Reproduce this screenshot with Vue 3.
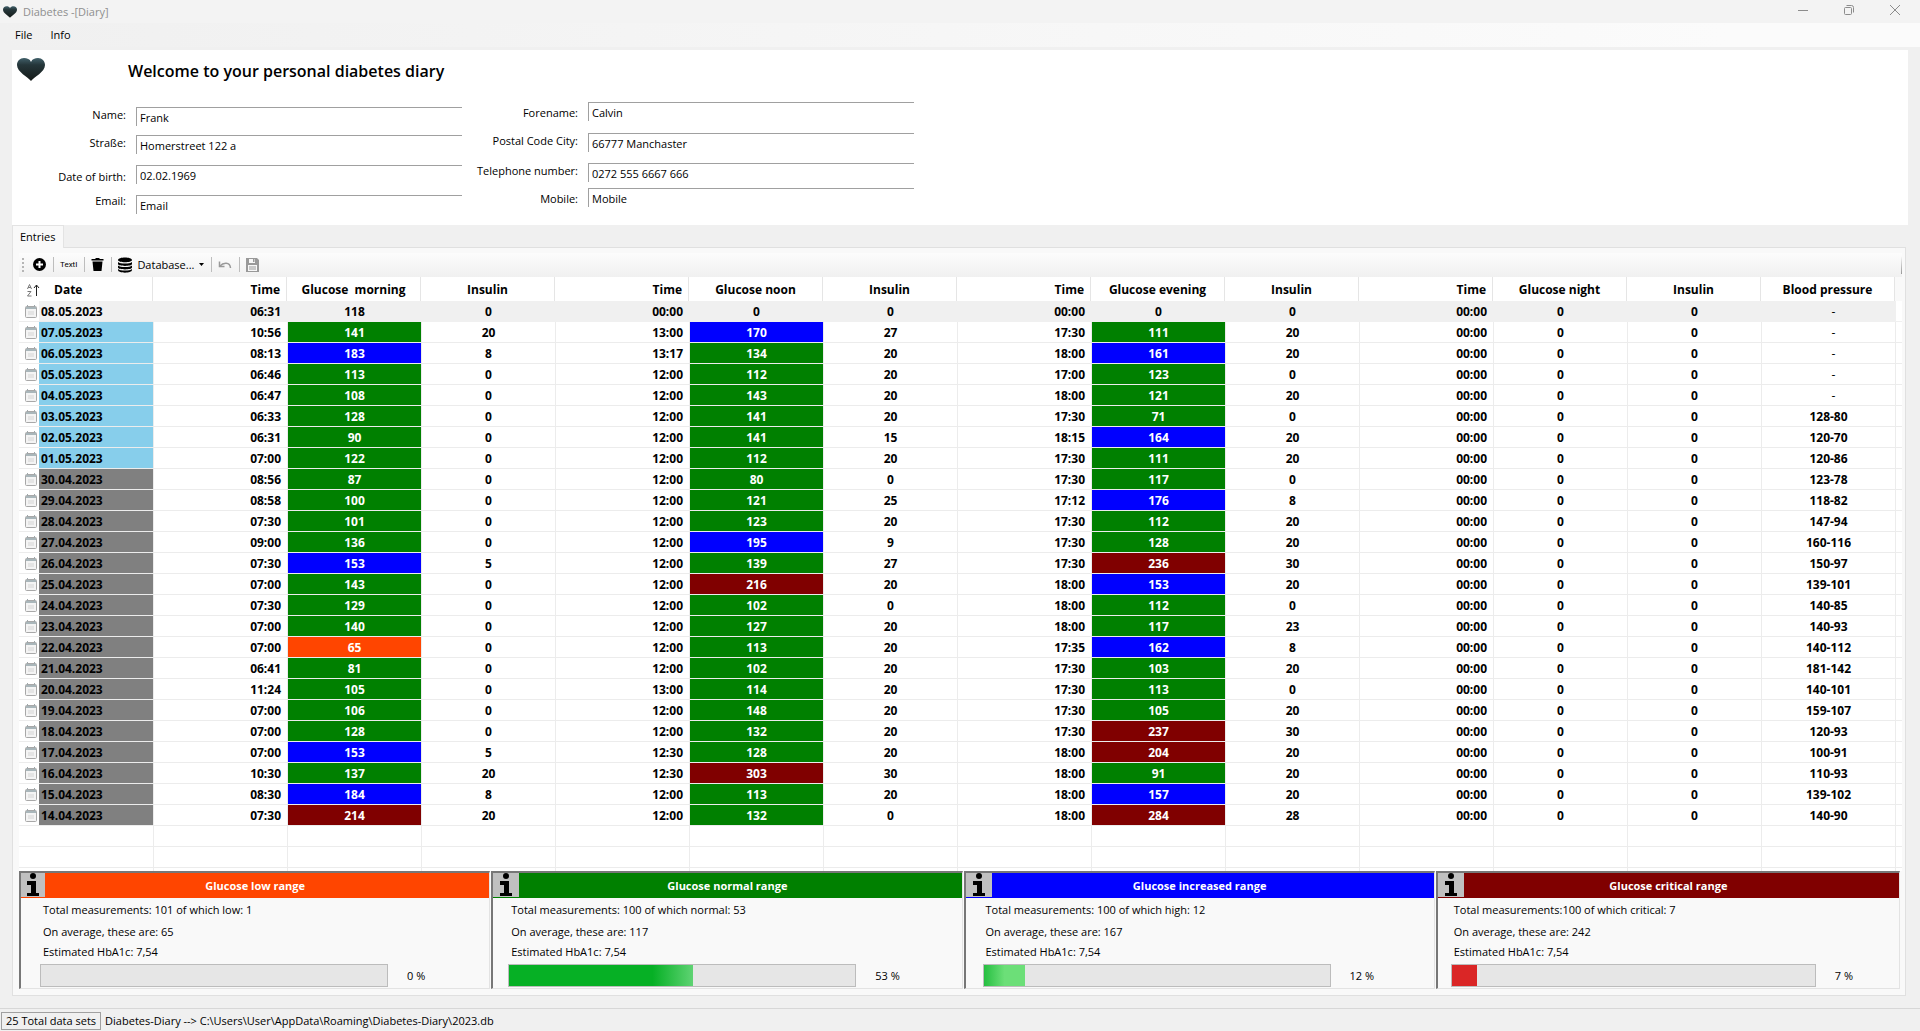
<script setup>
const leftFields = [
  { id: 'name', label: 'Name:', value: 'Frank' },
  { id: 'street', label: 'Straße:', value: 'Homerstreet 122 a' },
  { id: 'birth', label: 'Date of birth:', value: '02.02.1969' },
  { id: 'email', label: 'Email:', value: 'Email' },
]
const rightFields = [
  { id: 'forename', label: 'Forename:', value: 'Calvin' },
  { id: 'city', label: 'Postal Code City:', value: '66777 Manchaster' },
  { id: 'phone', label: 'Telephone number:', value: '0272 555 6667 666' },
  { id: 'mobile', label: 'Mobile:', value: 'Mobile' },
]

const headers = [
  'Time', 'Glucose\u00a0 morning', 'Insulin',
  'Time', 'Glucose noon', 'Insulin',
  'Time', 'Glucose evening', 'Insulin',
  'Time', 'Glucose night', 'Insulin',
  'Blood pressure',
]

const rows = `
08.05.2023 06:31 118 0 00:00 0 0 00:00 0 0 -
07.05.2023 10:56 141 20 13:00 170 27 17:30 111 20 -
06.05.2023 08:13 183 8 13:17 134 20 18:00 161 20 -
05.05.2023 06:46 113 0 12:00 112 20 17:00 123 0 -
04.05.2023 06:47 108 0 12:00 143 20 18:00 121 20 -
03.05.2023 06:33 128 0 12:00 141 20 17:30 71 0 128-80
02.05.2023 06:31 90 0 12:00 141 15 18:15 164 20 120-70
01.05.2023 07:00 122 0 12:00 112 20 17:30 111 20 120-86
30.04.2023 08:56 87 0 12:00 80 0 17:30 117 0 123-78
29.04.2023 08:58 100 0 12:00 121 25 17:12 176 8 118-82
28.04.2023 07:30 101 0 12:00 123 20 17:30 112 20 147-94
27.04.2023 09:00 136 0 12:00 195 9 17:30 128 20 160-116
26.04.2023 07:30 153 5 12:00 139 27 17:30 236 30 150-97
25.04.2023 07:00 143 0 12:00 216 20 18:00 153 20 139-101
24.04.2023 07:30 129 0 12:00 102 0 18:00 112 0 140-85
23.04.2023 07:00 140 0 12:00 127 20 18:00 117 23 140-93
22.04.2023 07:00 65 0 12:00 113 20 17:35 162 8 140-112
21.04.2023 06:41 81 0 12:00 102 20 17:30 103 20 181-142
20.04.2023 11:24 105 0 13:00 114 20 17:30 113 0 140-101
19.04.2023 07:00 106 0 12:00 148 20 17:30 105 20 159-107
18.04.2023 07:00 128 0 12:00 132 20 17:30 237 30 120-93
17.04.2023 07:00 153 5 12:30 128 20 18:00 204 20 100-91
16.04.2023 10:30 137 20 12:30 303 30 18:00 91 20 110-93
15.04.2023 08:30 184 8 12:00 113 20 18:00 157 20 139-102
14.04.2023 07:30 214 20 12:00 132 0 18:00 284 28 140-90
`.trim().split('\n').map((line, index) => {
  const [date, ...rest] = line.split(' ')
  const pressure = rest.pop()
  return {
    date,
    selected: index === 0,
    month: date.includes('.05.') ? 'current' : 'previous',
    cells: [...rest, '00:00', '0', '0', pressure],
  }
})

function cellClass(row, index) {
  if (index === 12) return row.cells[index] === '-' ? 'center dash' : 'center'
  const kind = index % 3
  if (kind === 0) return 'time'
  if (kind === 2 || row.selected || index === 10) return 'center'
  const value = Number(row.cells[index])
  if (value < 70) return 'center level low'
  if (value <= 150) return 'center level normal'
  if (value <= 200) return 'center level high'
  return 'center level critical'
}

const cards = [
  { id: 'low', title: 'Glucose low range', total: 'Total measurements: 101 of which low: 1', average: 'On average, these are: 65', percent: 0 },
  { id: 'normal', title: 'Glucose normal range', total: 'Total measurements: 100 of which normal: 53', average: 'On average, these are: 117', percent: 53 },
  { id: 'high', title: 'Glucose increased range', total: 'Total measurements: 100 of which high: 12', average: 'On average, these are: 167', percent: 12 },
  { id: 'critical', title: 'Glucose critical range', total: 'Total measurements:100 of which critical: 7', average: 'On average, these are: 242', percent: 7 },
]
</script>

<template>
  <div class="window">
    <svg class="defs" width="0" height="0" aria-hidden="true">
      <defs>
        <linearGradient id="heartFill" x1="0" y1="0" x2="0" y2="1">
          <stop offset="0" stop-color="#41606a" />
          <stop offset="0.3" stop-color="#25363a" />
          <stop offset="1" stop-color="#151a18" />
        </linearGradient>
        <symbol id="heart" viewBox="0 0 28 23">
          <path d="M14 23C11 19 0 14 0 7C0 3 3 0 7 0C10 0 13 1 14 4C15 1 18 0 21 0C25 0 28 3 28 7C28 14 17 19 14 23Z" fill="url(#heartFill)" />
        </symbol>
        <symbol id="calendar" viewBox="0 0 12 13">
          <rect x="0.500" y="1.500" width="11" height="11" rx="1" fill="#f4f4f4" stroke="#a8a8a8" />
          <path d="M1 2h10v2H1z" fill="#a9b6ba" />
          <path d="M2.500 0v2M9.500 0v2" stroke="#a0a8ab" />
          <path d="M3 6h6v4H3z" fill="#e4e4e4" />
        </symbol>
      </defs>
    </svg>

    <header class="titlebar">
      <svg class="title-icon" width="14" height="12"><use href="#heart" /></svg>
      <span class="title">Diabetes -[Diary]</span>
      <div class="window-buttons">
        <button type="button" aria-label="Minimize"><svg width="12" height="12"><path d="M1 6.500h10" stroke="#8c8c8c" fill="none" /></svg></button>
        <button type="button" aria-label="Restore"><svg width="12" height="12" fill="none" stroke="#8c8c8c"><rect x="1.500" y="3.500" width="7" height="7" rx="1" /><path d="M3.500 1.500h5a2 2 0 0 1 2 2v5" /></svg></button>
        <button type="button" aria-label="Close"><svg width="12" height="12"><path d="M1 1l10 10M11 1L1 11" stroke="#8c8c8c" fill="none" /></svg></button>
      </div>
    </header>
    <nav class="menubar">
      <button type="button">File</button>
      <button type="button">Info</button>
    </nav>

    <section class="profile">
      <div class="profile-head">
        <svg class="logo" width="28" height="23"><use href="#heart" /></svg>
        <h1>Welcome to your personal diabetes diary</h1>
      </div>
      <form class="form">
        <div class="labels left">
          <label v-for="f in leftFields" :key="f.id" :for="f.id">{{ f.label }}</label>
        </div>
        <div class="inputs left">
          <input v-for="f in leftFields" :id="f.id" :key="f.id" type="text" :value="f.value" />
        </div>
        <div class="labels right">
          <label v-for="f in rightFields" :key="f.id" :for="f.id">{{ f.label }}</label>
        </div>
        <div class="inputs right">
          <input v-for="f in rightFields" :id="f.id" :key="f.id" type="text" :value="f.value" />
        </div>
      </form>
    </section>

    <div class="tabs"><button type="button" class="tab">Entries</button></div>
    <main class="pane">
      <div class="toolbar">
        <span class="grip"></span>
        <button type="button" aria-label="Add entry">
          <svg width="13" height="13"><circle cx="6.500" cy="6.500" r="6.500" /><path d="M6.500 3v7M3 6.500h7" stroke="#fff" stroke-width="2" /></svg>
        </button>
        <span class="sep"></span>
        <button type="button" class="tiny">TextI</button>
        <span class="sep"></span>
        <button type="button" aria-label="Delete entry">
          <svg width="13" height="13"><path d="M0.500 1H4L5 0h3l1 1h3.500v1.500h-12zM1.500 3.500h10L10.500 13h-8z" /></svg>
        </button>
        <span class="sep"></span>
        <button type="button" class="database">
          <svg width="14" height="16"><path d="M0 3C0 -0.500 14 -0.500 14 3C14 6 0 6 0 3ZM0 5C2 7 12 7 14 5V7C14 9.500 0 9.500 0 7ZM0 8.500C2 10.500 12 10.500 14 8.500V10.500C14 13 0 13 0 10.500ZM0 12C2 14 12 14 14 12V13C14 16.500 0 16.500 0 13Z" /></svg>
          <span>Database...</span>
          <svg width="5" height="3"><path d="M0 0h5L2.500 3z" /></svg>
        </button>
        <span class="sep"></span>
        <button type="button" aria-label="Undo">
          <svg width="14" height="10" fill="none" stroke="#999"><path d="M1.500 1.500V6.500H6.500" stroke-width="1.500" /><path d="M2 6C5 2.500 12 1.500 12.500 8" stroke-width="1.500" /></svg>
        </button>
        <span class="sep"></span>
        <button type="button" aria-label="Save">
          <svg width="13" height="14"><path d="M0 0h11l2 2v12H0z" fill="#999" /><path d="M3 1h6v4H3zM2 7h9v6H2z" fill="#f7f7f7" /><path d="M7 1h1.500v3H7zM3 8.500h7v1H3zM3 10.500h7v1H3z" fill="#999" /></svg>
        </button>
        <span class="overflow"></span>
      </div>

      <table class="grid">
        <colgroup>
          <col v-for="n in 14" :key="n" />
          <col class="filler" />
        </colgroup>
        <thead>
          <tr>
            <th scope="col" class="date-head">
              <div>
                <svg width="13" height="13" fill="none" stroke="#777"><path d="M0.500 5L2.500 0.500L4.500 5M1 3.500h3M0.500 7.500h3.500L0.500 12h4" /><path d="M9.500 12V1M7 4L9.500 1L12 4" stroke="#222" /></svg>
                <span>Date</span>
              </div>
            </th>
            <th v-for="(h, i) in headers" :key="i" scope="col" :class="{ time: h === 'Time' }">{{ h }}</th>
            <td class="edge"></td>
          </tr>
        </thead>
        <tbody>
          <tr v-for="row in rows" :key="row.date" :class="{ selected: row.selected }">
            <th scope="row" class="date">
              <div>
                <svg width="12" height="13"><use href="#calendar" /></svg>
                <span :class="row.month">{{ row.date }}</span>
              </div>
            </th>
            <td v-for="(c, i) in row.cells" :key="i" :class="cellClass(row, i)">{{ c }}</td>
            <td class="end"></td>
          </tr>
          <tr v-for="n in 2" :key="'e' + n"><td class="first"></td><td v-for="k in 14" :key="k"></td></tr>
          <tr class="cut"><td class="first"></td><td v-for="k in 14" :key="k"></td></tr>
        </tbody>
      </table>

      <div class="cards">
        <section v-for="c in cards" :key="c.id" class="card" :class="'card-' + c.id">
          <div class="card-head" :class="c.id">
            <button type="button" aria-label="Information">
              <svg width="14" height="24"><circle cx="7" cy="3" r="3" /><path d="M1 8h9v12h3v3H1v-3h4v-8H1z" /></svg>
            </button>
            <h2>{{ c.title }}</h2>
          </div>
          <div class="card-body">
            <p class="total">{{ c.total }}</p>
            <p>{{ c.average }}</p>
            <p>Estimated HbA1c: 7,54</p>
            <div class="meter">
              <progress :aria-label="c.title" :value="c.percent" max="100"></progress>
              <span>{{ c.percent }} %</span>
            </div>
          </div>
        </section>
      </div>
    </main>

    <footer class="status">
      <span class="count">25 Total data sets</span>
      <span>Diabetes-Diary --&gt; C:\Users\User\AppData\Roaming\Diabetes-Diary\2023.db</span>
    </footer>
  </div>
</template>

<style>
body {
  background: #f0f0f0;
}
</style>

<style scoped>
.window {
  display: flex;
  flex-direction: column;
  min-height: 100vh;
  background: #f0f0f0;
  color: #000;
  font-family: "Open Sans", "Noto Sans", sans-serif;
  font-size: 11px;
  line-height: 16px;
}
.window * {
  box-sizing: border-box;
}
button {
  border: 0;
  padding: 0;
  background: none;
  color: inherit;
  font: inherit;
  display: flex;
  align-items: center;
}
.defs {
  position: absolute;
}
.titlebar {
  display: flex;
  align-items: center;
  height: 23px;
  padding: 0 19px 0 3px;
  background: #f3f3f3;
  color: #8f8f8f;
}
.title {
  margin-left: 6px;
}
.window-buttons {
  display: flex;
  gap: 34px;
  margin-left: auto;
  padding-bottom: 3px;
}
.menubar {
  display: flex;
  gap: 18px;
  height: 24px;
  padding-left: 15px;
  background: linear-gradient(90deg, #f0f0f0, #fbfbfb 90%);
}
.profile {
  margin: 3px 12px 0;
  height: 175px;
  background: #fff;
}
.profile-head {
  display: flex;
  align-items: center;
  height: 42px;
  padding-left: 5px;
}
.logo {
  margin-bottom: 4px;
}
h1 {
  margin: 0 0 0 83px;
  font-size: 16px;
  font-weight: 600;
}
.form {
  display: flex;
  align-items: flex-start;
  padding-top: 10px;
}
.labels,
.inputs {
  display: grid;
}
.labels {
  text-align: right;
}
.labels.left {
  width: 114px;
  margin-top: 5px;
  grid-template-rows: 28px 34px 24px 16px;
}
.inputs.left {
  width: 326px;
  margin: 5px 0 0 10px;
  grid-template-rows: 28px 30px 30px 20px;
}
.labels.right {
  width: 116px;
  margin-top: 3px;
  grid-template-rows: 28px 30px 28px 16px;
}
.inputs.right {
  width: 326px;
  margin-left: 10px;
  grid-template-rows: 31px 30px 25px 20px;
}
input {
  width: 100%;
  height: 19px;
  border: solid #a0a0a0;
  border-width: 1px 0 0 1px;
  padding: 1px 0 0 3px;
  background: #fff;
  font: inherit;
  color: inherit;
}
.tabs {
  display: flex;
  height: 22px;
  padding-left: 12px;
}
.tab {
  height: 23px;
  padding: 0 8px 1px 7px;
  border: 1px solid #e3e3e3;
  border-bottom: 0;
  background: #f9f9f9;
  position: relative;
}
.pane {
  margin: 0 14px 12px 12px;
  border: 1px solid #e0e0e0;
  padding: 5px 3px 6px 6px;
  background: #f9f9f9;
}
.toolbar {
  display: flex;
  align-items: center;
  height: 24px;
  padding: 0 0 1px 3px;
  background: linear-gradient(#fcfcfc, #f0f0f0);
}
.grip {
  width: 2px;
  height: 14px;
  margin-right: 9px;
  background: repeating-linear-gradient(#b5b5b5 0 2px, transparent 2px 4px);
}
.sep {
  width: 1px;
  height: 15px;
  margin: 0 6px 0 7px;
  background: #bdbdbd;
}
.tiny {
  font-family: Roboto, sans-serif;
  font-size: 8px;
}
.database {
  gap: 5px;
}
.overflow {
  width: 1px;
  height: 18px;
  margin-left: auto;
  background: linear-gradient(transparent, #999);
}
.grid {
  width: 100%;
  table-layout: fixed;
  border-collapse: separate;
  border-spacing: 0;
  background: #fff;
  font-size: 12px;
  font-weight: 700;
}
.filler {
  width: 7px;
}
th,
td {
  padding: 2px 0 0;
}
thead th {
  height: 24px;
  border-right: 1px solid #e5e5e5;
  text-align: center;
}
.edge {
  background: #f9f9f9;
}
.grid .time {
  text-align: right;
  padding-right: 6px;
}
.date-head div {
  display: flex;
  align-items: center;
  padding-left: 8px;
  gap: 14px;
}
tbody td,
tbody th {
  height: 21px;
  border-left: 1px solid #ececec;
  border-bottom: 1px solid #ececec;
  background-clip: padding-box;
}
tbody th,
tbody .first {
  border-left: 0;
}
.center {
  text-align: center;
}
.dash {
  padding-left: 10px;
  font-weight: 400;
}
.date {
  padding: 0;
}
.date div {
  display: flex;
  align-items: center;
  height: 20px;
  padding-left: 6px;
}
.date svg {
  flex: none;
  margin-right: 2px;
}
.date span {
  flex: 1;
  padding: 2px 0 0 2px;
  line-height: 18px;
  text-align: left;
}
.current {
  background: #87ceeb;
}
.previous {
  background: #808080;
}
.selected td {
  background: #f0f0f0;
  border-color: #f0f0f0;
}
.selected .date span {
  background: #f0f0f0;
}
.selected td.end {
  background: #fff;
}
.cut td {
  height: 3px;
  border-bottom: 0;
}
.level {
  color: #fff;
}
.low {
  background-color: #ff4500;
}
.normal {
  background-color: #008000;
}
.high {
  background-color: #0000ff;
}
.critical {
  background-color: #800000;
}
.cards {
  display: grid;
  grid-template-columns: repeat(3, 471fr) 464fr;
  gap: 1px;
  padding-right: 2px;
}
.card {
  border: solid #777;
  border-width: 2px 1px 1px 2px;
  border-right-color: #e3e3e3;
  border-bottom-color: #e3e3e3;
}
.card-head {
  display: grid;
  grid-template-columns: 26px 1fr 26px;
  align-items: start;
  height: 25px;
  color: #fff;
}
.card-head.low {
  grid-template-columns: 24px 1fr 24px;
}
.card-head button {
  height: 24px;
  justify-content: center;
  background: #c0c0c0;
  color: #000;
}
h2 {
  margin: 0;
  font-size: 11px;
  line-height: 26px;
  text-align: center;
}
.card-body {
  padding: 2px 0 1px 15px;
}
.card-low .card-body {
  padding-left: 19px;
}
.card-high .card-body {
  padding-left: 17px;
}
.card-critical .card-body {
  padding-left: 13px;
}
p {
  margin: 0;
  padding-left: 3px;
  line-height: 20px;
}
.total {
  margin-bottom: 2px;
}
.meter {
  display: flex;
  align-items: center;
  gap: 19px;
  padding-top: 2px;
}
progress {
  appearance: none;
  display: block;
  width: 348px;
  height: 23px;
  border: 1px solid #bcbcbc;
  background: #e6e6e6;
}
.card-critical progress {
  width: 365px;
}
progress::-webkit-progress-bar {
  background: #e6e6e6;
}
.card-normal progress::-webkit-progress-value {
  background: linear-gradient(90deg, #06b025 78%, #5fd373);
}
.card-high progress::-webkit-progress-value {
  background: linear-gradient(90deg, #26bf41, #6cdf78 50%);
}
.card-critical progress::-webkit-progress-value {
  background: #da2626;
}
.status {
  display: flex;
  align-items: center;
  gap: 4px;
  height: 23px;
  margin-top: auto;
  border-top: 1px solid #d7d7d7;
  padding: 1px 0 0 1px;
}
.count {
  border: 1px solid #a0a0a0;
  padding: 0 4px;
}
</style>
